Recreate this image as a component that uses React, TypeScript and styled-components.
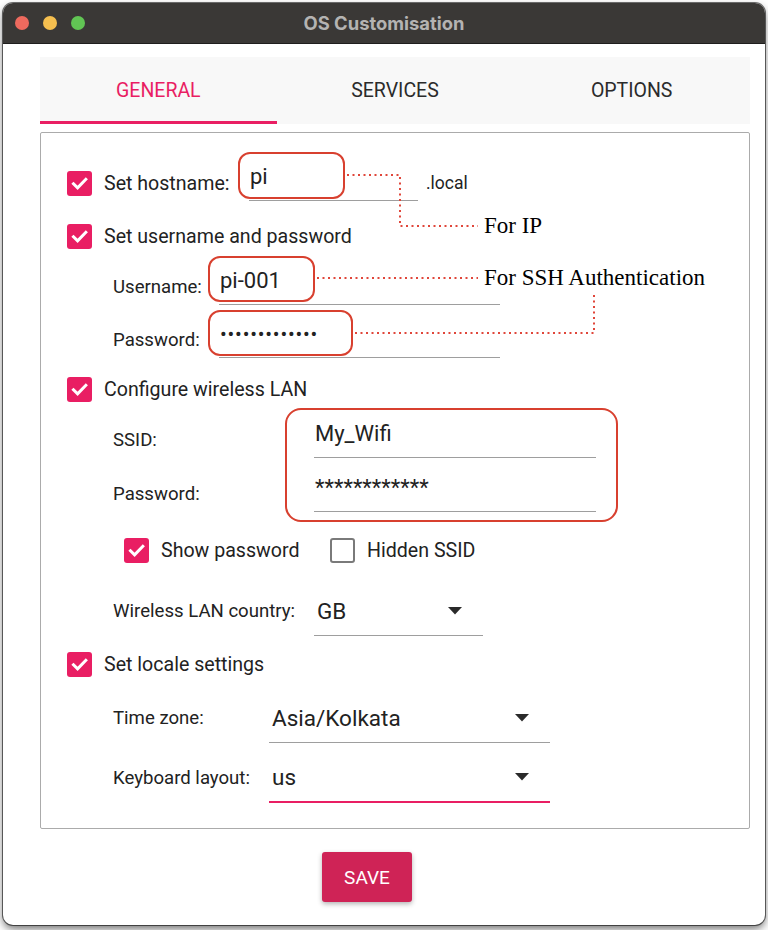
import React from "react";
import styled, { createGlobalStyle } from "styled-components";

const PINK = "#e91e63";

const Global = createGlobalStyle`
  html, body { margin: 0; padding: 0; background: #ffffff; }
  body { width: 768px; height: 930px; overflow: hidden; font-family: Roboto, "Noto Sans", sans-serif; }
  * { box-sizing: border-box; }
`;

const Page = styled.div`
  position: relative;
  width: 768px;
  height: 930px;
  padding: 3px 3px 0 3px;
`;

const Window = styled.div`
  width: 762px;
  height: 922px;
  border-radius: 10px;
  overflow: hidden;
  background: #ffffff;
  display: flex;
  flex-direction: column;
  box-shadow: 0 0 0 1px rgba(0, 0, 0, 0.55), 0 4px 9px rgba(0, 0, 0, 0.55);
`;

const TitleBar = styled.div`
  height: 41px;
  flex: none;
  background: #3a3836;
  border-bottom: 1px solid #1f1e1d;
  display: grid;
  grid-template-columns: 1fr auto 1fr;
  align-items: center;
  padding-left: 12px;
`;

const Lights = styled.div`
  display: flex;
  gap: 14px;
`;

const Light = styled.span<{ $c: string }>`
  width: 14px;
  height: 14px;
  border-radius: 50%;
  background: ${(p) => p.$c};
`;

const Title = styled.div`
  font-family: Inter, "Liberation Sans", sans-serif;
  font-weight: 700;
  font-size: 18.4px;
  color: #b4b3b2;
  margin-left: -12px;
`;

const Content = styled.div`
  flex: 1;
  padding: 13px 15px 0 37px;
  display: flex;
  flex-direction: column;
`;

const TabBar = styled.div`
  height: 67px;
  background: #f8f8f8;
  display: grid;
  grid-template-columns: repeat(3, 1fr);
`;

const Tab = styled.div<{ $active?: boolean }>`
  display: flex;
  align-items: center;
  justify-content: center;
  font-size: 19.5px;
  color: ${(p) => (p.$active ? PINK : "#2b2b2b")};
  border-bottom: 3px solid ${(p) => (p.$active ? PINK : "transparent")};
  padding-top: 3px;
`;

const Panel = styled.div`
  margin-top: 8px;
  height: 697px;
  border: 1px solid #ababab;
  border-radius: 2px;
  padding: 32px 0 0 26px;
  display: flex;
  flex-direction: column;
`;

const Row = styled.div<{ $h: number; $mt?: number; $indent?: number }>`
  display: flex;
  align-items: center;
  height: ${(p) => p.$h}px;
  margin-top: ${(p) => p.$mt ?? 0}px;
  padding-left: ${(p) => p.$indent ?? 0}px;
  color: #222;
`;

const Box = styled.span<{ $on?: boolean }>`
  width: 25px;
  height: 25px;
  flex: none;
  border-radius: 3px;
  background: ${(p) => (p.$on ? PINK : "#fff")};
  border: ${(p) => (p.$on ? "none" : "2px solid #7a7a7a")};
  display: flex;
  align-items: center;
  justify-content: center;
`;

const CheckLabel = styled.span<{ $w?: number }>`
  margin-left: 12px;
  font-size: 19.6px;
  color: #222;
  ${(p) => (p.$w ? `width: ${p.$w}px; flex: none;` : "")}
`;

const FieldLabel = styled.span<{ $w: number }>`
  width: ${(p) => p.$w}px;
  flex: none;
  font-size: 18.6px;
  color: #222;
`;

const TextField = styled.div<{ $w: number }>`
  width: ${(p) => p.$w}px;
  height: 36px;
  flex: none;
  align-self: center;
  border-bottom: 1px solid #9e9e9e;
  font-size: 22px;
  line-height: 24px;
  color: #222;
  white-space: nowrap;
  padding-left: 1px;
`;

const Dots = styled.span`
  letter-spacing: 0.8px;
  font-size: 20px;
`;

const Suffix = styled.span`
  margin-left: 8px;
  font-size: 17.5px;
  color: #222;
`;

const Select = styled.div<{ $w: number; $focus?: boolean }>`
  width: ${(p) => p.$w}px;
  height: 50px;
  flex: none;
  display: flex;
  align-items: center;
  justify-content: space-between;
  padding: 0 21px 0 3px;
  border-bottom: ${(p) => (p.$focus ? `2px solid ${PINK}` : "1px solid #9e9e9e")};
  font-size: 22.5px;
  color: #222;
`;

const ButtonRow = styled.div`
  margin-top: 23px;
  padding-left: 282px;
`;

const SaveButton = styled.button`
  width: 90px;
  height: 50px;
  border: none;
  border-radius: 3px;
  background: #cf2356;
  color: #fff;
  font-family: Roboto, sans-serif;
  font-size: 19px;
  box-shadow: 0 2px 5px rgba(0, 0, 0, 0.3);
`;

/* annotation overlay */
const Overlay = styled.svg`
  position: absolute;
  left: 0;
  top: 0;
  width: 768px;
  height: 930px;
  pointer-events: none;
`;

const Highlight = styled.div<{ $x: number; $y: number; $w: number; $h: number; $r?: number }>`
  position: absolute;
  left: ${(p) => p.$x}px;
  top: ${(p) => p.$y}px;
  width: ${(p) => p.$w}px;
  height: ${(p) => p.$h}px;
  border: 2.5px solid #d8402f;
  border-radius: ${(p) => p.$r ?? 12}px;
  pointer-events: none;
`;

const Note = styled.span<{ $x: number; $y: number }>`
  position: absolute;
  left: ${(p) => p.$x}px;
  top: ${(p) => p.$y}px;
  font-family: "Liberation Serif", "Times New Roman", serif;
  font-size: 23px;
  line-height: 26px;
  color: #000;
  white-space: nowrap;
`;

const Check = () => (
  <svg width="25" height="25" viewBox="0 0 25 25">
    <path d="M6.5 12.8 L10.6 16.8 L18.8 8.4" fill="none" stroke="#fff" strokeWidth="3" strokeLinecap="square" />
  </svg>
);

const Arrow = () => (
  <svg width="14" height="8" viewBox="0 0 14 8">
    <path d="M0 0 H14 L7 7.5 Z" fill="#2a2a2a" />
  </svg>
);

const CheckBox = ({ on }: { on?: boolean }) => <Box $on={on}>{on && <Check />}</Box>;

export default function App() {
  return (
    <>
      <Global />
      <Page>
        <Window>
          <TitleBar>
            <Lights>
              <Light $c="#ed6a5e" />
              <Light $c="#f5bf4f" />
              <Light $c="#61c554" />
            </Lights>
            <Title>OS Customisation</Title>
            <span />
          </TitleBar>
          <Content>
            <TabBar>
              <Tab $active>GENERAL</Tab>
              <Tab>SERVICES</Tab>
              <Tab>OPTIONS</Tab>
            </TabBar>
            <Panel>
              <Row $h={36}>
                <CheckBox on />
                <CheckLabel $w={145}>Set hostname:</CheckLabel>
                <TextField $w={169}>pi</TextField>
                <Suffix>.local</Suffix>
              </Row>
              <Row $h={26} $mt={22}>
                <CheckBox on />
                <CheckLabel>Set username and password</CheckLabel>
              </Row>
              <Row $h={36} $mt={20} $indent={46}>
                <FieldLabel $w={106}>Username:</FieldLabel>
                <TextField $w={281}>pi-001</TextField>
              </Row>
              <Row $h={36} $mt={17} $indent={46}>
                <FieldLabel $w={106}>Password:</FieldLabel>
                <TextField $w={281}>
                  <Dots>•••••••••••••</Dots>
                </TextField>
              </Row>
              <Row $h={26} $mt={18}>
                <CheckBox on />
                <CheckLabel>Configure wireless LAN</CheckLabel>
              </Row>
              <Row $h={36} $mt={20} $indent={46}>
                <FieldLabel $w={201}>SSID:</FieldLabel>
                <TextField $w={282}>My_Wifi</TextField>
              </Row>
              <Row $h={36} $mt={18} $indent={46}>
                <FieldLabel $w={201}>Password:</FieldLabel>
                <TextField $w={282}>************</TextField>
              </Row>
              <Row $h={26} $mt={25} $indent={57}>
                <CheckBox on />
                <CheckLabel $w={169}>Show password</CheckLabel>
                <CheckBox />
                <CheckLabel>Hidden SSID</CheckLabel>
              </Row>
              <Row $h={50} $mt={23} $indent={46}>
                <FieldLabel $w={201}>Wireless LAN country:</FieldLabel>
                <Select $w={169}>
                  <span>GB</span>
                  <Arrow />
                </Select>
              </Row>
              <Row $h={26} $mt={15}>
                <CheckBox on />
                <CheckLabel>Set locale settings</CheckLabel>
              </Row>
              <Row $h={50} $mt={16} $indent={46}>
                <FieldLabel $w={156}>Time zone:</FieldLabel>
                <Select $w={281}>
                  <span>Asia/Kolkata</span>
                  <Arrow />
                </Select>
              </Row>
              <Row $h={50} $mt={10} $indent={46}>
                <FieldLabel $w={156}>Keyboard layout:</FieldLabel>
                <Select $w={281} $focus>
                  <span>us</span>
                  <Arrow />
                </Select>
              </Row>
            </Panel>
            <ButtonRow>
              <SaveButton>SAVE</SaveButton>
            </ButtonRow>
          </Content>
        </Window>

        <Highlight $x={238} $y={152} $w={107} $h={47} />
        <Highlight $x={208} $y={256} $w={107} $h={46} />
        <Highlight $x={208} $y={310} $w={145} $h={46} />
        <Highlight $x={285} $y={408} $w={333} $h={114} $r={16} />
        <Overlay viewBox="0 0 768 930">
          <g fill="none" stroke="#e0463a" strokeWidth="2" strokeDasharray="2 3.5">
            <polyline points="347,175 400,175 400,226 478,226" />
            <polyline points="317,278 478,278" />
            <polyline points="355,333 594,333 594,295" />
          </g>
        </Overlay>
        <Note $x={484} $y={213}>For IP</Note>
        <Note $x={484} $y={265}>For SSH Authentication</Note>
      </Page>
    </>
  );
}
